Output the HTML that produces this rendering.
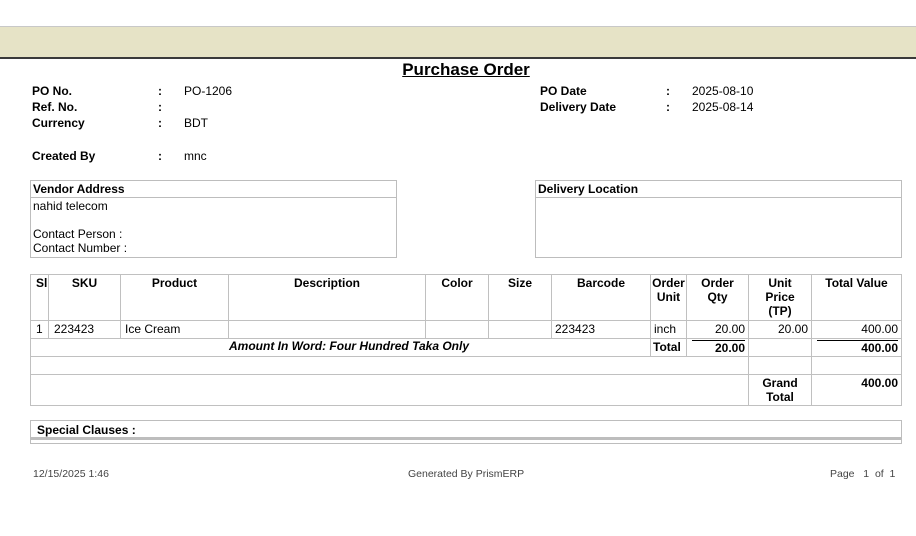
<!DOCTYPE html>
<html><head><meta charset="utf-8"><style>
*{margin:0;padding:0;box-sizing:border-box}
body{width:916px;height:536px;background:#fff;font-family:"Liberation Sans",Arial,sans-serif;font-size:12px;color:#000;position:relative;overflow:hidden}
.a{position:absolute;white-space:nowrap}
.b{font-weight:bold}
table{position:absolute;border-collapse:collapse;table-layout:fixed;left:30px;top:274px;width:871px}
td{border:1px solid #c0c0c0;padding:0 3px;vertical-align:top;font-size:12px;line-height:14px;overflow:hidden;white-space:nowrap}
th{border:1px solid #c0c0c0;padding:1px 2px;vertical-align:top;font-size:12px;line-height:14px;font-weight:bold;text-align:center;overflow:hidden;white-space:nowrap}
.r{text-align:right}
.bx{position:absolute;border:1px solid #bdbdbd}
</style></head><body>
<div class="a" style="left:0;top:26px;width:916px;height:1px;background:#c8c8c8"></div>
<div class="a" style="left:0;top:27px;width:916px;height:30px;background:#e6e3c6"></div>
<div class="a" style="left:0;top:57px;width:916px;height:2px;background:#3a3a3a"></div>
<div class="a b" style="left:0;width:932px;top:60px;text-align:center;font-size:17px;text-decoration:underline">Purchase Order</div>

<div class="a b" style="left:32px;top:84px">PO No.</div><div class="a b" style="left:158px;top:84px">:</div><div class="a" style="left:184px;top:84px">PO-1206</div>
<div class="a b" style="left:32px;top:100px">Ref. No.</div><div class="a b" style="left:158px;top:100px">:</div>
<div class="a b" style="left:32px;top:116px">Currency</div><div class="a b" style="left:158px;top:116px">:</div><div class="a" style="left:184px;top:116px">BDT</div>
<div class="a b" style="left:32px;top:149px">Created By</div><div class="a b" style="left:158px;top:149px">:</div><div class="a" style="left:184px;top:149px">mnc</div>

<div class="a b" style="left:540px;top:84px">PO Date</div><div class="a b" style="left:666px;top:84px">:</div><div class="a" style="left:692px;top:84px">2025-08-10</div>
<div class="a b" style="left:540px;top:100px">Delivery Date</div><div class="a b" style="left:666px;top:100px">:</div><div class="a" style="left:692px;top:100px">2025-08-14</div>

<div class="bx" style="left:30px;top:180px;width:367px;height:78px"></div>
<div class="a" style="left:30px;top:197px;width:367px;height:1px;background:#bdbdbd"></div>
<div class="a b" style="left:33px;top:182px">Vendor Address</div>
<div class="a" style="left:33px;top:199px">nahid telecom</div>
<div class="a" style="left:33px;top:227px">Contact Person :</div>
<div class="a" style="left:33px;top:241px">Contact Number :</div>

<div class="bx" style="left:535px;top:180px;width:367px;height:78px"></div>
<div class="a" style="left:535px;top:197px;width:367px;height:1px;background:#bdbdbd"></div>
<div class="a b" style="left:538px;top:182px">Delivery Location</div>

<table>
<colgroup><col style="width:18px"><col style="width:72px"><col style="width:108px"><col style="width:197px"><col style="width:63px"><col style="width:63px"><col style="width:99px"><col style="width:36px"><col style="width:62px"><col style="width:63px"><col style="width:90px"></colgroup>
<tr style="height:46px"><th style="padding:1px 0;text-align:left;padding-left:5px">Sl</th><th>SKU</th><th>Product</th><th>Description</th><th>Color</th><th>Size</th><th>Barcode</th><th style="padding:1px 0">Order<br>Unit</th><th>Order<br>Qty</th><th>Unit<br>Price<br>(TP)</th><th>Total Value</th></tr>
<tr style="height:18px"><td style="padding:1px 0 0 5px">1</td><td style="padding:1px 0 0 5px">223423</td><td style="padding:1px 0 0 4px">Ice Cream</td><td></td><td></td><td></td><td style="padding-top:1px">223423</td><td style="padding-top:1px">inch</td><td class="r" style="padding-top:1px">20.00</td><td class="r" style="padding-top:1px">20.00</td><td class="r" style="padding-top:1px">400.00</td></tr>
<tr style="height:18px"><td colspan="7" class="b" style="text-align:center;font-style:italic;padding-left:20px">Amount In Word: Four Hundred Taka Only</td><td class="b" style="padding:1px 2px">Total</td><td class="r b" style="padding-top:1px"><div style="border-top:1px solid #000;margin-left:2px">20.00</div></td><td></td><td class="r b" style="padding-top:1px"><div style="border-top:1px solid #000;margin-left:2px">400.00</div></td></tr>
<tr style="height:18px"><td colspan="9"></td><td></td><td></td></tr>
<tr style="height:31px"><td colspan="9"></td><td class="b" style="text-align:center;padding-top:1px">Grand<br>Total</td><td class="r b" style="padding-top:1px">400.00</td></tr>
</table>

<div class="bx" style="left:30px;top:420px;width:872px;height:24px"></div>
<div class="a" style="left:31px;top:437px;width:870px;height:3px;background:#bdbdbd"></div>
<div class="a b" style="left:37px;top:423px">Special Clauses :</div>

<div class="a" style="left:33px;top:468px;font-size:10.5px;color:#444">12/15/2025 1:46</div>
<div class="a" style="left:408px;top:468px;font-size:10.5px;color:#444">Generated By PrismERP</div>
<div class="a" style="left:830px;top:468px;font-size:10.5px;color:#444">Page &nbsp; 1 &nbsp;of &nbsp;1</div>
</body></html>
